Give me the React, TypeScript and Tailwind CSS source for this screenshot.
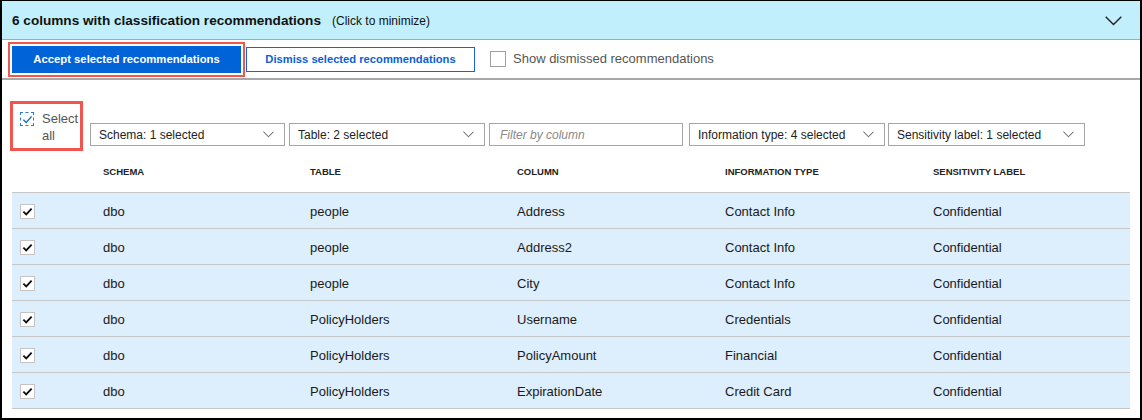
import React from 'react';

type Row = {
  schema: string;
  table: string;
  column: string;
  infoType: string;
  label: string;
};

const ROWS: Row[] = [
  { schema: 'dbo', table: 'people', column: 'Address', infoType: 'Contact Info', label: 'Confidential' },
  { schema: 'dbo', table: 'people', column: 'Address2', infoType: 'Contact Info', label: 'Confidential' },
  { schema: 'dbo', table: 'people', column: 'City', infoType: 'Contact Info', label: 'Confidential' },
  { schema: 'dbo', table: 'PolicyHolders', column: 'Username', infoType: 'Credentials', label: 'Confidential' },
  { schema: 'dbo', table: 'PolicyHolders', column: 'PolicyAmount', infoType: 'Financial', label: 'Confidential' },
  { schema: 'dbo', table: 'PolicyHolders', column: 'ExpirationDate', infoType: 'Credit Card', label: 'Confidential' },
];

const COLS = 'grid grid-cols-[91px_207px_207px_208px_208px_1fr] items-center';

const Chevron = ({ className }: { className?: string }) => (
  <svg className={className} viewBox="0 0 12 7" fill="none" stroke="currentColor" strokeWidth="1">
    <path d="M0.5 0.5 L6 6 L11.5 0.5" />
  </svg>
);

const Dropdown = ({ label, width }: { label: string; width: string }) => (
  <div
    className={`${width} h-[23px] flex items-center justify-between border border-[#a6a6a6] bg-white pl-[8px] pr-[10px] text-[12px] text-[#222]`}>
    <span>{label}</span>
    <Chevron className="w-[11px] h-[7px] text-[#333]" />
  </div>
);

const RowCheck = () => (
  <span className="w-[15px] h-[15px] flex items-center justify-center border border-[#c4c4c4] bg-white">
    <svg viewBox="0 0 12 12" className="w-[11px] h-[11px]" fill="none" stroke="#111" strokeWidth="2">
      <path d="M1.5 6.2 L4.6 9.2 L10.5 2.8" />
    </svg>
  </span>
);

const App = () => {
  return (
    <div
      className="w-[1142px] h-[420px] overflow-hidden bg-white border-2 border-t border-black flex flex-col"
      style={{ fontFamily: '"Liberation Sans", Arial, sans-serif' }}>
      {/* collapsible header */}
      <div className="h-[39px] shrink-0 bg-[#c1effb] border-b border-[#a8a8a8] flex items-center justify-between pl-[10px] pr-[18px] pt-[2px]">
        <div className="flex items-baseline gap-[11px] text-[#111]">
          <span className="text-[13.6px] font-bold">6 columns with classification recommendations</span>
          <span className="text-[12px]">(Click to minimize)</span>
        </div>
        <Chevron className="w-[17px] h-[10px] text-[#222]" />
      </div>

      {/* actions */}
      <div className="h-[40px] shrink-0 border-b-2 border-[#a8a8a8] flex items-center pl-[6px]">
        <div className="border-2 border-[#f0564d] p-[2px]">
          <button className="w-[229px] h-[27px] bg-[#0063d8] text-white text-[11.3px] font-bold">
            Accept selected recommendations
          </button>
        </div>
        <button className="ml-[1px] w-[229px] h-[25px] border border-[#1a63d6] bg-white text-[#0a5fd4] text-[11.2px] font-bold">
          Dismiss selected recommendations
        </button>
        <span className="ml-[15px] w-[16px] h-[16px] border border-[#a0a0a0] bg-white" />
        <span className="ml-[7px] text-[13px] text-[#555]">Show dismissed recommendations</span>
      </div>

      {/* filters */}
      <div className="flex items-start pt-[21px] pl-[8px]">
        <div className="w-[73px] h-[50px] border-[3px] border-[#f0564d] flex items-start pt-[6px] pl-[7px]">
          <span className="mt-[2px] w-[14px] h-[14px] border border-dashed border-[#2a7ad8] flex items-center justify-center">
            <svg viewBox="0 0 12 12" className="w-[11px] h-[11px]" fill="none" stroke="#1c6fd6" strokeWidth="1.6">
              <path d="M1.5 6.3 L4.6 9.2 L10.5 2.6" />
            </svg>
          </span>
          <span className="ml-[8px] text-[13px] leading-[17px] text-[#555] text-left">
            Select
            <br />
            all
          </span>
        </div>
        <div className="flex mt-[22px] ml-[7px]">
          <Dropdown label="Schema: 1 selected" width="w-[195px]" />
          <div className="w-[4px]" />
          <Dropdown label="Table: 2 selected" width="w-[196px]" />
          <div className="w-[4px]" />
          <div className="w-[194px] h-[23px] flex items-center border border-[#a6a6a6] bg-white pl-[10px] text-[12px] italic text-[#888]">
            Filter by column
          </div>
          <div className="w-[6px]" />
          <Dropdown label="Information type: 4 selected" width="w-[196px]" />
          <div className="w-[3px]" />
          <Dropdown label="Sensitivity label: 1 selected" width="w-[197px]" />
        </div>
      </div>

      {/* table */}
      <div className="px-[10px]">
        <div className={`${COLS} h-[41px] pt-[2px] text-[9.5px] font-bold text-[#222]`}>
          <span />
          <span>SCHEMA</span>
          <span>TABLE</span>
          <span>COLUMN</span>
          <span>INFORMATION TYPE</span>
          <span>SENSITIVITY LABEL</span>
        </div>
        <div className="border-b border-[#c6c6c6]">
          {ROWS.map((r, i) => (
            <div
              key={`row-${i}`}
              className={`${COLS} h-[36px] pt-[2px] border-t border-[#c6c6c6] bg-[#ddeefc] text-[13px] text-[#1a1a1a]`}>
              <span className="pl-[8px]">
                <RowCheck />
              </span>
              <span>{r.schema}</span>
              <span>{r.table}</span>
              <span>{r.column}</span>
              <span>{r.infoType}</span>
              <span>{r.label}</span>
            </div>
          ))}
        </div>
      </div>
    </div>
  );
};

export default App;
